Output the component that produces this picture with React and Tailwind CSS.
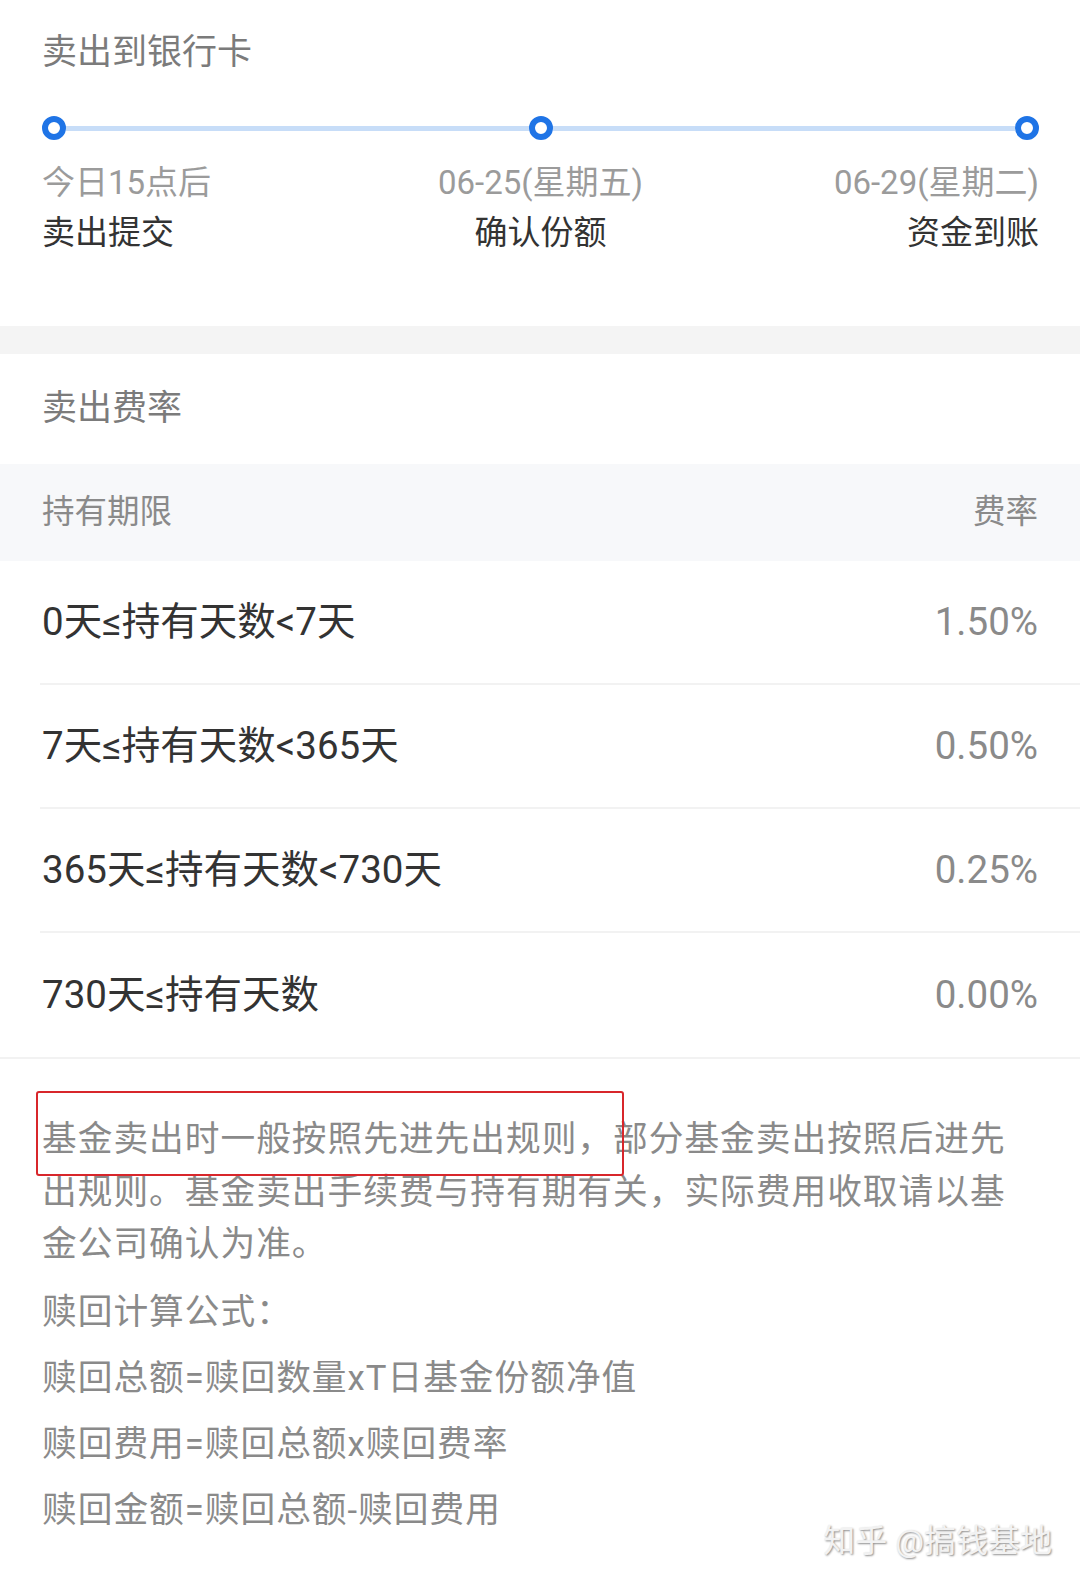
const steps = [
  { date: "今日15点后", label: "卖出提交", align: "text-left" },
  { date: "06-25(星期五)", label: "确认份额", align: "text-center" },
  { date: "06-29(星期二)", label: "资金到账", align: "text-right" },
];

const rates = [
  { range: "0天≤持有天数<7天", rate: "1.50%" },
  { range: "7天≤持有天数<365天", rate: "0.50%" },
  { range: "365天≤持有天数<730天", rate: "0.25%" },
  { range: "730天≤持有天数", rate: "0.00%" },
];

const formulas = [
  "赎回计算公式：",
  "赎回总额=赎回数量xT日基金份额净值",
  "赎回费用=赎回总额x赎回费率",
  "赎回金额=赎回总额-赎回费用",
];

function Dot() {
  return (
    <div className="w-[24px] h-[24px] rounded-full border-[6px] border-[#1f74e6] bg-white shrink-0" />
  );
}

export default function App() {
  return (
    <div
      className="relative w-full h-[1586px] bg-white overflow-hidden"
      style={{ fontFamily: "Roboto, 'Noto Sans CJK SC', sans-serif" }}
    >
      {/* sell to bank card */}
      <div className="pt-[28px] pb-[68px] pl-[42px] pr-[41px]">
        <div className="text-[35px] leading-[50px] text-[#7b7b7b]">卖出到银行卡</div>
        <div className="mt-[38px] flex items-center">
          <Dot />
          <div className="flex-1 h-[5px] bg-[#c7ddf8]" />
          <Dot />
          <div className="flex-1 h-[5px] bg-[#c7ddf8]" />
          <Dot />
        </div>
        <div className="mt-[18px] grid grid-cols-3">
          {steps.map((s) => (
            <div key={s.label} className={s.align}>
              <div className="text-[33px] leading-[50px] text-[#9b9b9b]">{s.date}</div>
              <div className="text-[33px] leading-[50px] text-[#333333]">{s.label}</div>
            </div>
          ))}
        </div>
      </div>

      <div className="h-[28px] bg-[#f4f4f4]" />

      {/* fee table */}
      <div className="h-[110px] flex items-center px-[42px] text-[35px] text-[#7b7b7b]">卖出费率</div>
      <div className="h-[97px] bg-[#f7f8fa] flex items-center justify-between px-[42px] text-[32.5px] text-[#8a8a8a]">
        <span>持有期限</span>
        <span>费率</span>
      </div>
      <div className="border-b-2 border-[#f2f2f2]">
        {rates.map((r, i) => (
          <div key={r.range} className="pl-[40px]">
            <div
              className={
                "h-[124px] flex items-center justify-between pr-[42px] " +
                (i < rates.length - 1 ? "border-b-2 border-[#f2f2f2]" : "")
              }
            >
              <span className="pl-[2px] text-[38.5px] text-[#333333]">{r.range}</span>
              <span className="text-[38.5px] text-[#8a8a8a]">{r.rate}</span>
            </div>
          </div>
        ))}
      </div>

      {/* notes */}
      <div className="relative pt-[54px] pl-[42px] text-[#8a8a8a]">
        <p className="w-[980px] text-[34.7px] leading-[52.6px] tracking-[1px]">
          基金卖出时一般按照先进先出规则，部分基金卖出按照后进先出规则。基金卖出手续费与持有期有关，实际费用收取请以基金公司确认为准。
        </p>
        <div className="mt-[8px]">
          {formulas.map((f) => (
            <div key={f} className="text-[34.7px] leading-[66px] tracking-[1px]">{f}</div>
          ))}
        </div>
        <div className="absolute left-[36px] top-[32px] w-[588px] h-[85px] border-2 border-[#d8262b] rounded-[3px]" />
      </div>

      <div className="absolute right-[28px] bottom-[25px] text-[32px] leading-[40px] text-[#f2f2f2] [text-shadow:1px_1px_2px_rgba(0,0,0,0.45)]">
        知乎 @搞钱基地
      </div>
    </div>
  );
}
